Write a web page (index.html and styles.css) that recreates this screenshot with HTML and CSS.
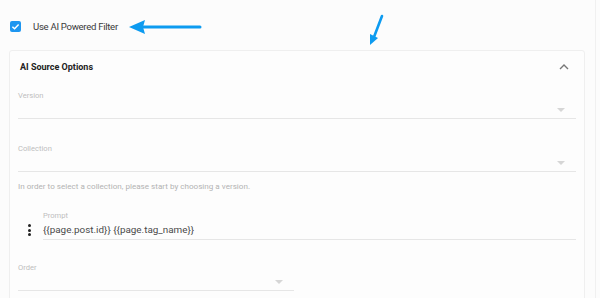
FILE: index.html
```html
<!DOCTYPE html>
<html lang="en">
<head>
	<meta charset="UTF-8">
	<title>AI Filter</title>
	<link rel="stylesheet" href="styles.css">
</head>
<body>
	<div class="page">
		<!-- 顶部勾选框 -->
		<div class="check-row">
			<span class="checkbox">
				<svg width="11" height="11" viewBox="0 0 12 12"><path d="M2.6 6.2 L5 8.5 L9.4 3.8" fill="none" stroke="#fff" stroke-width="1.6"/></svg>
			</span>
			<span class="check-label">Use AI Powered Filter</span>
			<svg class="arrow-left" width="80" height="18" viewBox="0 0 80 18">
				<path d="M14 9 L72 9" stroke="#0d9bf0" stroke-width="3" stroke-linecap="round"/>
				<path d="M1 9 L17 2 L15 9 L17 16 Z" fill="#0d9bf0"/>
			</svg>
			<svg class="arrow-down" width="20" height="36" viewBox="0 0 20 36">
				<path d="M15 3 L7 24" stroke="#0d9bf0" stroke-width="2.6" stroke-linecap="round"/>
				<path d="M3 32 L3 21 L11 25 Z" fill="#0d9bf0"/>
			</svg>
		</div>

		<div class="card">
			<div class="card-head">
				<span class="card-title">AI Source Options</span>
				<svg width="12" height="8" viewBox="0 0 12 8"><path d="M2 6 L6 2 L10 6" fill="none" stroke="#777" stroke-width="1.4"/></svg>
			</div>

			<div class="field">
				<div class="label">Version</div>
				<div class="select"><span class="caret"></span></div>
			</div>

			<div class="field">
				<div class="label">Collection</div>
				<div class="select"><span class="caret"></span></div>
			</div>
			<div class="hint">In order to select a collection, please start by choosing a version.</div>

			<div class="prompt-row">
				<span class="dots"><i></i><i></i><i></i></span>
				<div class="field grow">
					<div class="label">Prompt</div>
					<div class="input">{{page.post.id}} {{page.tag_name}}</div>
				</div>
			</div>

			<div class="field short">
				<div class="label">Order</div>
				<div class="select"><span class="caret"></span></div>
			</div>
		</div>
	</div>
</body>
</html>
```

FILE: styles.css
```css
*{
	margin: 0px;
	padding: 0px;
	box-sizing: border-box;
}
body{
	background-color: #fcfcfc;
	font-family: Roboto, "Liberation Sans", sans-serif;
	width: 600px;
	height: 298px;
	overflow: hidden;
}
.page{
	width: 596px;
	height: 298px;
	border-right: 1px solid #f0f0f0;
	padding: 0 10px 0 9px;
}

/*勾选框*/
.check-row{
	position: relative;
	height: 50px;
	display: flex;
	align-items: center;
	padding: 3px 0 0 1px;
}
.checkbox{
	width: 11px;
	height: 11px;
	border-radius: 2px;
	background-color: #1e96f0;
	display: flex;
	align-items: center;
	justify-content: center;
}
.check-label{
	margin-left: 12px;
	font-size: 9.6px;
	letter-spacing: -0.3px;
	color: #3a3a3a;
}
.arrow-left{
	margin-left: 10px;
	margin-top: 1px;
}
.arrow-down{
	position: absolute;
	left: 358px;
	top: 13px;
}

/*卡片*/
.card{
	background-color: #fdfdfd;
	border: 1px solid #efefef;
	border-radius: 3px;
	height: 260px;
	padding: 0 8px 0 8px;
}
.card-head{
	height: 32px;
	display: flex;
	align-items: center;
	justify-content: space-between;
	padding: 0 6px 0 2px;
}
.card-title{
	font-size: 9px;
	font-weight: bold;
	color: #222;
}
.field{
	margin-top: 7px;
}
.label{
	font-size: 7.6px;
	color: #bdbdbd;
	height: 11px;
	line-height: 11px;
}
.select{
	height: 18px;
	border-bottom: 1px solid #e6e6e6;
	display: flex;
	justify-content: flex-end;
	align-items: center;
	padding-right: 11px;
}
.caret{
	width: 0;
	height: 0;
	border-left: 4px solid transparent;
	border-right: 4px solid transparent;
	border-top: 4px solid #d6d6d6;
	margin-top: 1px;
}
.field + .field{
	margin-top: 24px;
}
.hint{
	font-size: 8.1px;
	color: #b3b3b3;
	margin-top: 9px;
	height: 12px;
}
.prompt-row{
	display: flex;
	align-items: flex-end;
	margin-top: 17px;
}
.dots{
	width: 25px;
	display: flex;
	flex-direction: column;
	align-items: center;
	gap: 1.5px;
	padding: 0 2px 4px 0;
}
.dots i{
	width: 3px;
	height: 3px;
	border-radius: 50%;
	background-color: #222;
}
.grow{
	flex: 1;
	margin-top: 0;
}
.input{
	font-size: 9.9px;
	color: #4a4a4a;
	height: 19px;
	line-height: 18px;
	border-bottom: 1px solid #e6e6e6;
}
.short{
	width: 276px;
	margin-top: 22px;
}
```
